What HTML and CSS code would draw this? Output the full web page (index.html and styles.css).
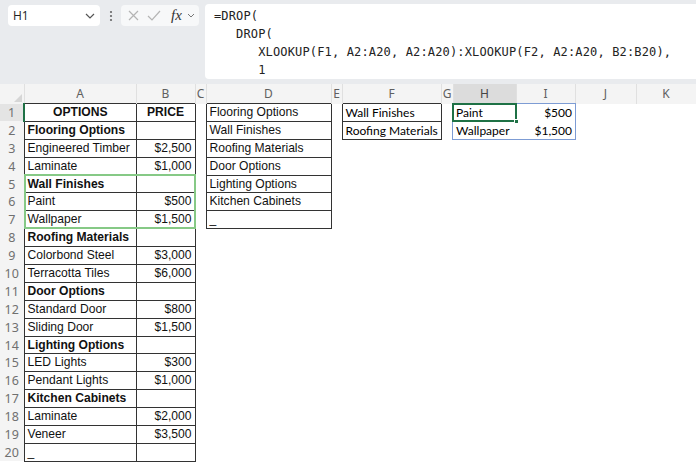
FILE: index.html
```html
<!DOCTYPE html>
<html>
<head>
<meta charset="utf-8">
<title>Sheet</title>
<link rel="stylesheet" href="styles.css">
</head>
<body>
<div class="topbar">
  <div class="controls">
    <div class="namebox"><span>H1</span><svg class="chev" width="10" height="6" viewBox="0 0 10 6"><path d="M1 1l4 4 4-4" fill="none" stroke="#555" stroke-width="1.2"/></svg></div>
    <div class="dots"><svg width="4" height="12" viewBox="0 0 4 12"><circle cx="2" cy="2" r="1.1"/><circle cx="2" cy="6" r="1.1"/><circle cx="2" cy="10" r="1.1"/></svg></div>
    <div class="fbox">
      <svg class="ico-x" width="11" height="11" viewBox="0 0 11 11"><path d="M1 1l9 9M10 1l-9 9" fill="none" stroke="#b4b4b4" stroke-width="1.2"/></svg>
      <svg class="ico-ok" width="14" height="11" viewBox="0 0 14 11"><path d="M1 6l4 4 8-9" fill="none" stroke="#b4b4b4" stroke-width="1.2"/></svg>
      <span class="fx">fx</span>
      <svg class="chev2" width="8" height="5" viewBox="0 0 8 5"><path d="M1 1l3 3 3-3" fill="none" stroke="#777" stroke-width="1"/></svg>
    </div>
  </div>
  <div class="formula">=DROP(
   DROP(
      XLOOKUP(F1, A2:A20, A2:A20):XLOOKUP(F2, A2:A20, B2:B20),
      1</div>
</div>

<div class="sheet-wrap">
<table class="sheet">
  <colgroup>
    <col class="w-rh"><col class="w-a"><col class="w-b"><col class="w-c"><col class="w-d"><col class="w-e"><col class="w-f"><col class="w-g"><col class="w-h"><col class="w-i"><col class="w-j"><col class="w-k">
  </colgroup>
  <tr class="hdr">
    <th class="corner"><svg width="8" height="8" viewBox="0 0 8 8"><path d="M8 0V8H0z" fill="#d6d6d6"/></svg></th>
    <th class="ch">A</th><th class="ch">B</th><th class="ch">C</th><th class="ch">D</th><th class="ch">E</th><th class="ch">F</th><th class="ch">G</th><th class="ch sel">H</th><th class="ch">I</th><th class="ch">J</th><th class="ch">K</th>
  </tr>
  <tr class="r">
    <th class="rh rsel">1</th>
    <td class="b c bold">OPTIONS</td><td class="b c bold">PRICE</td><td></td>
    <td class="b">Flooring Options</td><td></td>
    <td class="b ap">Wall Finishes</td><td></td>
    <td class="ap">Paint</td><td class="ap r">$500</td><td></td><td></td>
  </tr>
  <tr class="r">
    <th class="rh">2</th>
    <td class="b bold">Flooring Options</td><td class="b"></td><td></td>
    <td class="b">Wall Finishes</td><td></td>
    <td class="b ap">Roofing Materials</td><td></td>
    <td class="ap">Wallpaper</td><td class="ap r">$1,500</td><td></td><td></td>
  </tr>
  <tr class="r">
    <th class="rh">3</th>
    <td class="b">Engineered Timber</td><td class="b r">$2,500</td><td></td>
    <td class="b">Roofing Materials</td><td colspan="7"></td>
  </tr>
  <tr class="r">
    <th class="rh">4</th>
    <td class="b">Laminate</td><td class="b r">$1,000</td><td></td>
    <td class="b">Door Options</td><td colspan="7"></td>
  </tr>
  <tr class="r">
    <th class="rh">5</th>
    <td class="b bold">Wall Finishes</td><td class="b"></td><td></td>
    <td class="b">Lighting Options</td><td colspan="7"></td>
  </tr>
  <tr class="r">
    <th class="rh">6</th>
    <td class="b">Paint</td><td class="b r">$500</td><td></td>
    <td class="b">Kitchen Cabinets</td><td colspan="7"></td>
  </tr>
  <tr class="r">
    <th class="rh">7</th>
    <td class="b">Wallpaper</td><td class="b r">$1,500</td><td></td>
    <td class="b">_</td><td colspan="7"></td>
  </tr>
  <tr class="r"><th class="rh">8</th><td class="b bold">Roofing Materials</td><td class="b"></td><td colspan="9"></td></tr>
  <tr class="r"><th class="rh">9</th><td class="b">Colorbond Steel</td><td class="b r">$3,000</td><td colspan="9"></td></tr>
  <tr class="r"><th class="rh">10</th><td class="b">Terracotta Tiles</td><td class="b r">$6,000</td><td colspan="9"></td></tr>
  <tr class="r"><th class="rh">11</th><td class="b bold">Door Options</td><td class="b"></td><td colspan="9"></td></tr>
  <tr class="r"><th class="rh">12</th><td class="b">Standard Door</td><td class="b r">$800</td><td colspan="9"></td></tr>
  <tr class="r"><th class="rh">13</th><td class="b">Sliding Door</td><td class="b r">$1,500</td><td colspan="9"></td></tr>
  <tr class="r"><th class="rh">14</th><td class="b bold">Lighting Options</td><td class="b"></td><td colspan="9"></td></tr>
  <tr class="r"><th class="rh">15</th><td class="b">LED Lights</td><td class="b r">$300</td><td colspan="9"></td></tr>
  <tr class="r"><th class="rh">16</th><td class="b">Pendant Lights</td><td class="b r">$1,000</td><td colspan="9"></td></tr>
  <tr class="r"><th class="rh">17</th><td class="b bold">Kitchen Cabinets</td><td class="b"></td><td colspan="9"></td></tr>
  <tr class="r"><th class="rh">18</th><td class="b">Laminate</td><td class="b r">$2,000</td><td colspan="9"></td></tr>
  <tr class="r"><th class="rh">19</th><td class="b">Veneer</td><td class="b r">$3,500</td><td colspan="9"></td></tr>
  <tr class="r"><th class="rh">20</th><td class="b">_</td><td class="b"></td><td colspan="9"></td></tr>
</table>
<div class="refbox"></div>
<div class="spill"></div>
<div class="active"><span class="handle"></span></div>
</div>
</body>
</html>
```

FILE: styles.css
```css
* { box-sizing: border-box; }
html, body { margin: 0; padding: 0; }
body {
  width: 696px;
  height: 464px;
  overflow: hidden;
  background: #fff;
  font-family: "Liberation Sans", Arial, sans-serif;
  color: #111;
}

/* ---------- top bar ---------- */
.topbar {
  display: flex;
  align-items: flex-start;
  background: #e9ebee;
  height: 84px;
  padding-top: 5px;
}
.controls {
  display: flex;
  align-items: center;
  height: 21px;
  padding-left: 8px;
}
.namebox {
  width: 92px;
  height: 21px;
  background: #fff;
  border-radius: 4px;
  display: flex;
  align-items: center;
  justify-content: space-between;
  padding: 0 5px 0 5px;
  font-family: "Open Sans", sans-serif;
  font-size: 12px;
  color: #222;
}
.dots {
  width: 21px;
  display: flex;
  justify-content: center;
  fill: #666;
}
.fbox {
  width: 78px;
  height: 21px;
  background: #f7f8f9;
  border-radius: 4px;
  display: flex;
  align-items: center;
  padding-left: 7px;
}
.ico-ok { margin-left: 8px; }
.fx {
  margin-left: 10px;
  font-family: "Liberation Serif", serif;
  font-style: italic;
  font-size: 15px;
  color: #333;
  line-height: 1;
}
.chev2 { margin-left: 5px; }
.formula {
  flex: 1;
  margin-left: 6px;
  margin-top: -1px;
  height: 75px;
  background: #fff;
  border-radius: 4px 0 0 4px;
  font-family: "DejaVu Sans Mono", monospace;
  font-size: 12px;
  letter-spacing: 0.15px;
  line-height: 18px;
  padding: 3px 0 0 9px;
  white-space: pre;
  color: #222;
}

/* ---------- sheet ---------- */
.sheet-wrap { position: relative; }
.sheet {
  border-collapse: collapse;
  table-layout: fixed;
  width: 696px;
}
.w-rh { width: 24px; }
.w-a { width: 112px; }
.w-b { width: 59px; }
.w-c { width: 11px; }
.w-d { width: 125px; }
.w-e { width: 11px; }
.w-f { width: 99px; }
.w-g { width: 12px; }
.w-h { width: 63px; }
.w-i { width: 59px; }
.w-j { width: 61px; }
.w-k { width: 60px; }

.hdr { height: 19px; }
.hdr th {
  background: #f4f4f4;
  font-family: "Noto Sans", sans-serif;
  font-weight: 400;
  font-size: 12px;
  color: #606060;
  padding: 0;
  line-height: 19px;
  text-align: center;
  border-right: 1px solid #e0e0e0;
}
.hdr th.corner {
  text-align: right;
  vertical-align: bottom;
  padding: 0 2px 2px 0;
  line-height: 0;
}
.hdr th.sel { background: #dcdcdc; color: #444; }

.r { height: 17.9px; }
.r th.rh {
  background: #f4f4f4;
  font-family: "Noto Sans", sans-serif;
  font-weight: 400;
  font-size: 12.5px;
  color: #707070;
  padding: 0;
  text-align: center;
  line-height: 15px;
}
.r th.rsel { background: #e4e4e4; border-right: 2px solid #1e7145; }
.r td {
  padding: 0 3px;
  font-size: 12.1px;
  line-height: 15px;
  white-space: nowrap;
  overflow: hidden;
  vertical-align: middle;
}
td.b { border: 1px solid #333; }
td.c { text-align: center; }
td.r { text-align: right; }
td.bold { font-weight: 700; }
td.ap {
  font-family: Lato, "Liberation Sans", sans-serif;
  font-size: 12px;
  color: #000;
}

/* ---------- overlays ---------- */
.refbox {
  position: absolute;
  left: 24px;
  top: 90px;
  width: 172px;
  height: 55px;
  border: 2px solid #86c986;
}
.spill {
  position: absolute;
  left: 452px;
  top: 19px;
  width: 124px;
  height: 37px;
  border: 1px solid #7d9cd4;
}
.active {
  position: absolute;
  left: 452px;
  top: 19px;
  width: 65px;
  height: 19px;
  border: 2px solid #1e7145;
}
.handle {
  position: absolute;
  right: -4px;
  bottom: -4px;
  width: 5px;
  height: 5px;
  background: #1e7145;
  border: 1px solid #fff;
}
```
